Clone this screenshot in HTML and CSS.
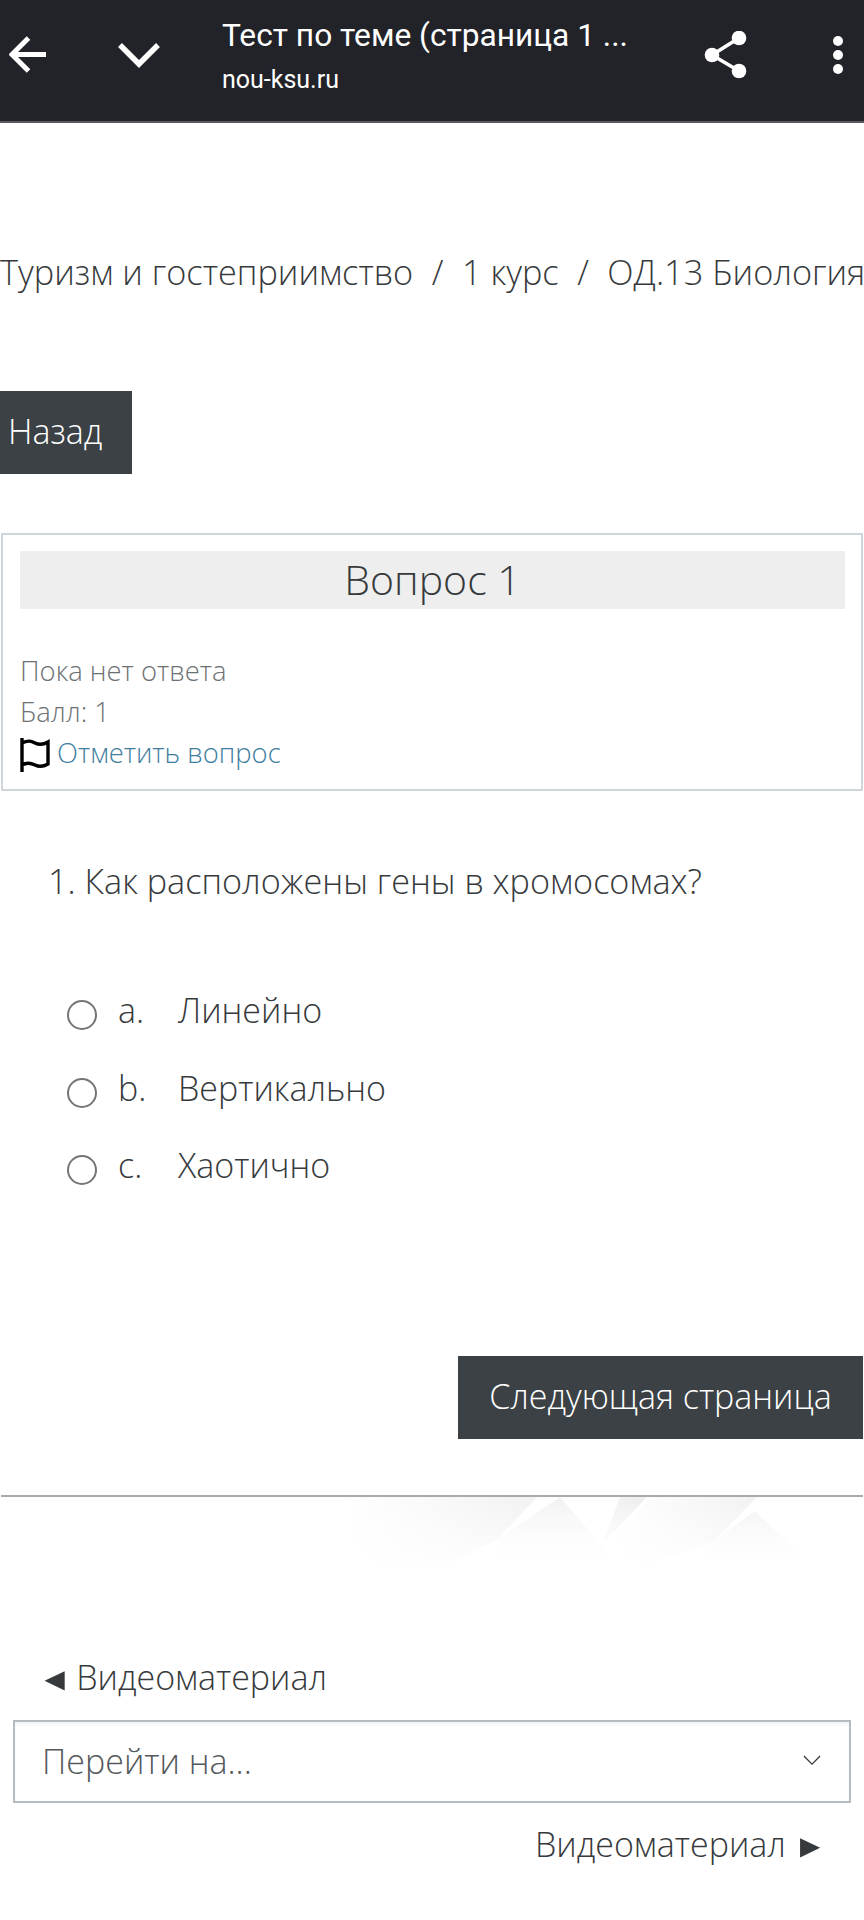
FILE: index.html
```html
<!DOCTYPE html>
<html lang="ru">
<head>
<meta charset="utf-8">
<title>Тест по теме</title>
<link rel="stylesheet" href="styles.css">
</head>
<body>
<header class="topbar">
  <svg class="ic-back" viewBox="0 0 38 38"><path d="M37 18.5H4M19.5 2 3 18.5 19.5 35" fill="none" stroke="#fff" stroke-width="5"/></svg>
  <svg class="ic-down" viewBox="0 0 42 26"><path d="M2 3l19 19L40 3" fill="none" stroke="#fff" stroke-width="5.5"/></svg>
  <div class="titles">
    <div class="title">Тест по теме (страница 1 ...</div>
    <div class="url">nou-ksu.ru</div>
  </div>
  <svg class="ic-share" viewBox="0 0 44 48"><path d="M36 7 9 24l27 16" fill="none" stroke="#fff" stroke-width="3.6"/><circle cx="36" cy="7" r="7.3" fill="#fff"/><circle cx="9" cy="24" r="7.3" fill="#fff"/><circle cx="36" cy="40" r="7.3" fill="#fff"/></svg>
  <div class="dots"><i></i><i></i><i></i></div>
</header>
<main class="page">
  <nav class="crumbs">Туризм и гостеприимство<span class="sep">/</span>1 курс<span class="sep">/</span>ОД.13 Биология</nav>
  <a class="btn btn-back">Назад</a>
  <section class="info">
    <h3 class="qno">Вопрос 1</h3>
    <div class="state">Пока нет ответа</div>
    <div class="state">Балл: 1</div>
    <div class="flagrow">
      <svg class="ic-flag" viewBox="0 0 32 34"><path d="M3 0v34M3 5c6-3 9-2 13 0s8 2 13-1v22c-5 3-9 3-13 1s-8-3-13 0" fill="none" stroke="#000" stroke-width="3.4"/></svg>
      <a class="flaglink">Отметить вопрос</a>
    </div>
  </section>
  <p class="question">1. Как расположены гены в хромосомах?</p>
  <div class="answers">
    <label class="answer"><span class="radio"></span><span class="letter">a.</span><span>Линейно</span></label>
    <label class="answer"><span class="radio"></span><span class="letter">b.</span><span>Вертикально</span></label>
    <label class="answer"><span class="radio"></span><span class="letter">c.</span><span>Хаотично</span></label>
  </div>
  <div class="next-row"><a class="btn btn-next">Следующая страница</a></div>
  <hr class="rule">
  <svg class="deco" viewBox="0 0 864 90">
    <defs>
      <linearGradient id="fv" x1="0" y1="0" x2="0" y2="1"><stop offset="0" stop-color="#f3f3f3"/><stop offset="1" stop-color="#fff"/></linearGradient>
      <linearGradient id="fh" x1="1" y1="0" x2="0" y2="0"><stop offset="0" stop-color="#f2f2f2"/><stop offset="1" stop-color="#fff"/></linearGradient>
      <linearGradient id="fs" x1="1" y1="0" x2="0" y2="1"><stop offset="0" stop-color="#eeeeee"/><stop offset="1" stop-color="#f9f9f9"/></linearGradient>
    </defs>
    <path d="M345 0H537L497 43 440 70H360Z" fill="url(#fh)"/>
    <path d="M560 0 622 72H497V43Z" fill="url(#fv)"/>
    <path d="M620 0H647L603 46Z" fill="url(#fs)"/>
    <path d="M650 0H757L713 45 640 70 610 50Z" fill="url(#fh)"/>
    <path d="M755 14 815 72H690L713 45Z" fill="url(#fv)"/>
  </svg>
  <div class="prev-row"><span class="tri tri-left">◄</span>Видеоматериал</div>
  <div class="select"><span>Перейти на...</span><svg class="ic-sel" viewBox="0 0 20 12"><path d="M1 1l9 9 9-9" fill="none" stroke="#333" stroke-width="1.3"/></svg></div>
  <div class="next-link">Видеоматериал<span class="tri tri-right">►</span></div>
</main>
</body>
</html>
```
FILE: styles.css
```css
* { box-sizing: border-box; }
html, body { margin: 0; background: #fff; }
body { width: 864px; height: 1920px; overflow: hidden; font-family: "Open Sans", sans-serif; font-weight: 300; color: #373a3c; }
.topbar { height: 123px; background: #212328; border-bottom: 2px solid #5a5b5e; display: flex; align-items: center; color: #fff; font-family: Roboto, sans-serif; font-weight: 400; }
.ic-back { width: 38px; height: 38px; margin-left: 9px; margin-top: -11px; flex: none; }
.ic-down { width: 42px; height: 26px; margin-left: 71px; margin-top: -11px; flex: none; }
.titles { margin-left: 62px; width: 440px; margin-top: -10px; }
.title { font-size: 31.7px; line-height: 40px; white-space: nowrap; }
.url { font-size: 25px; line-height: 30px; margin-top: 9px; }
.ic-share { width: 44px; height: 48px; margin-left: 41px; margin-top: -11px; flex: none; }
.dots { margin-left: 86px; margin-top: -11px; display: flex; flex-direction: column; gap: 4px; }
.dots i { width: 10px; height: 10px; border-radius: 50%; background: #fff; display: block; }
.page { display: flex; flex-direction: column; }
.crumbs { margin-top: 124px; font-size: 34.3px; line-height: 50px; white-space: nowrap; }
.sep { margin: 0 18.5px; }
.btn { background: #3b4145; color: #fff; font-size: 34px; line-height: 50px; display: block; }
.btn-back { margin-top: 94px; width: 132px; height: 83px; padding: 15px 8px; }
.info { margin: 59px 1px 0 1px; height: 258px; border: 2px solid #cfd6da; padding: 16px 16px 0 17px; }
.qno { margin: 0; height: 58px; background: #eee; font-size: 41px; font-weight: 300; line-height: 56px; text-align: center; color: #373a3c; }
.state { font-size: 27.4px; line-height: 41px; color: #6e7173; }
.qno + .state { margin-top: 41px; }
.flagrow { display: flex; align-items: center; height: 41px; }
.ic-flag { width: 32px; height: 34px; flex: none; margin-right: 6px; margin-left: -1px; margin-top: 4px; }
.flaglink { font-size: 27.4px; color: #3f7e9e; }
.question { margin: 65px 0 0 48px; font-size: 34.2px; line-height: 50px; }
.answers { margin: 79px 0 0 67px; display: flex; flex-direction: column; gap: 27.5px; }
.answer { display: flex; align-items: center; height: 50px; font-size: 34px; }
.radio { width: 30px; height: 30px; border: 2.5px solid #757575; border-radius: 50%; margin-right: 21px; margin-top: 10px; flex: none; }
.letter { width: 60px; }
.next-row { display: flex; justify-content: flex-end; margin-top: 166px; padding-right: 1px; }
.btn-next { width: 405px; height: 83px; padding: 15px 0; text-align: center; }
.rule { margin: 56px 1px 0; border: 0; height: 2px; background: #aaa; }
.deco { display: block; width: 864px; height: 90px; -webkit-mask-image: linear-gradient(#000 5px, transparent 80px); mask-image: linear-gradient(#000 5px, transparent 80px); }
.prev-row { margin: 65px 0 0 45px; font-size: 34px; line-height: 50px; white-space: nowrap; }
.tri { display: inline-block; font-size: 32px; line-height: 1; font-family: "Liberation Sans", sans-serif; }
.tri-left { margin-right: 7px; margin-left: -7.5px; transform: scaleX(1.05); transform-origin: left center; }
.tri-right { margin-left: 9.5px; transform: scaleX(1.05); transform-origin: right center; }
.select { margin: 18px 13px 0; height: 83px; border: 2px solid #b4bcc1; box-shadow: inset 0 3px 3px rgba(0,0,0,.04); display: flex; align-items: center; justify-content: space-between; padding: 0 27px 2px; font-size: 34px; color: #55595c; }
.ic-sel { width: 18px; height: 11px; flex: none; margin-right: 1px; }
.next-link { margin: 16px 37px 0 0; text-align: right; font-size: 34px; line-height: 50px; }
```
